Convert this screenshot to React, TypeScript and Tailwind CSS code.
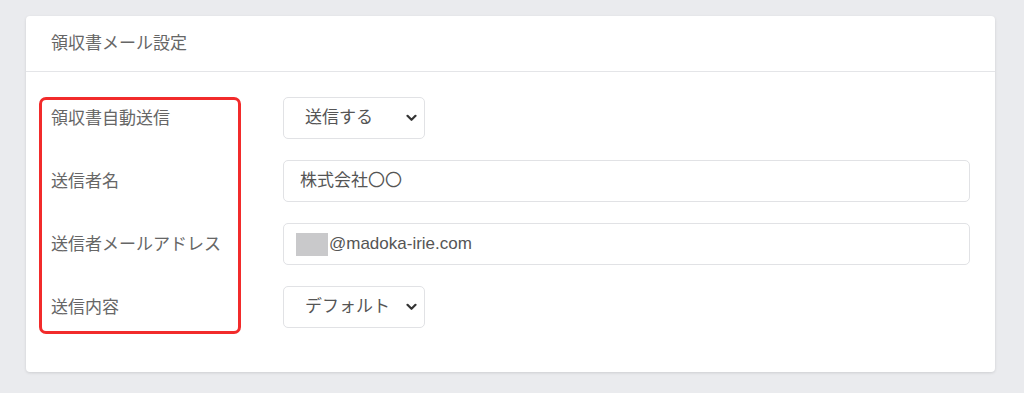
import React from "react"

const font = { fontFamily: '"Liberation Sans", "Noto Sans CJK JP", sans-serif' }

type Row = { label: string; kind: "select" | "text" | "email"; value: string }

const rows: Row[] = [
  { label: "領収書自動送信", kind: "select", value: "送信する" },
  { label: "送信者名", kind: "text", value: "株式会社〇〇" },
  { label: "送信者メールアドレス", kind: "email", value: "@madoka-irie.com" },
  { label: "送信内容", kind: "select", value: "デフォルト" },
]

function Chevron() {
  return (
    <svg width="11" height="8" viewBox="0 0 11 8" className="shrink-0">
      <path d="M1.5 1.8 L5.5 5.8 L9.5 1.8" fill="none" stroke="#333" strokeWidth="2.2" strokeLinecap="round" strokeLinejoin="round" />
    </svg>
  )
}

function Control({ row }: { row: Row }) {
  if (row.kind === "select") {
    return (
      <div className="flex h-[42px] w-[142px] items-center justify-between rounded-[5px] border border-[#e1e2e5] bg-white pl-[21px] pr-[7px] text-[17px] text-[#555]">
        <span>{row.value}</span>
        <Chevron />
      </div>
    )
  }
  return (
    <div className="flex h-[42px] w-full items-center rounded-[5px] border border-[#e1e2e5] bg-white pl-[16px] text-[17px] text-[#555]">
      {row.kind === "email" && <span className="-ml-[4px] mr-[1px] inline-block h-[23px] w-[32px] bg-[#c9c9cb]" />}
      <span>{row.value}</span>
    </div>
  )
}

export default function App() {
  return (
    <div className="min-h-[393px] w-[1024px] bg-[#eaebee] pt-[16px] pl-[26px]" style={font}>
      <div className="w-[969px] rounded-[4px] bg-white shadow-[0_1px_3px_rgba(0,0,0,0.12)]">
        <div className="flex h-[56px] items-center border-b border-[#e4e5e8] px-[25px] pt-[1px] text-[17px] text-[#666]">
          領収書メール設定
        </div>
        <div className="relative pt-[25px] pb-[44px] pl-[25px] pr-[25px]">
          {/* annotation box around the labels */}
          <div className="pointer-events-none absolute left-[13px] top-[25px] h-[237px] w-[202px] rounded-[7px] border-[3px] border-[#f22b2b]" />
          <div className="flex flex-col gap-[21px]">
            {rows.map((row) => (
              <div key={row.label} className="flex items-center">
                <div className="mt-[1px] w-[232px] shrink-0 text-[17px] text-[#666]">{row.label}</div>
                <div className="flex-1">
                  <Control row={row} />
                </div>
              </div>
            ))}
          </div>
        </div>
      </div>
    </div>
  )
}
